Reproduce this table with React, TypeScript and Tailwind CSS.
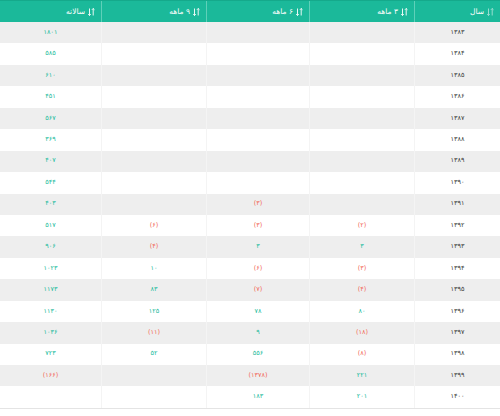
const rows: [string, string, string, string, string][] = [
  ['۱۳۸۳', '', '', '', '۱۸۰۱'],
  ['۱۳۸۴', '', '', '', '۵۸۵'],
  ['۱۳۸۵', '', '', '', '۶۱۰'],
  ['۱۳۸۶', '', '', '', '۴۵۱'],
  ['۱۳۸۷', '', '', '', '۵۶۷'],
  ['۱۳۸۸', '', '', '', '۳۶۹'],
  ['۱۳۸۹', '', '', '', '۴۰۷'],
  ['۱۳۹۰', '', '', '', '۵۴۴'],
  ['۱۳۹۱', '', '(۳)', '', '۴۰۳'],
  ['۱۳۹۲', '(۲)', '(۳)', '(۶)', '۵۱۷'],
  ['۱۳۹۳', '۳', '۳', '(۴)', '۹۰۶'],
  ['۱۳۹۴', '(۳)', '(۶)', '۱۰', '۱۰۲۳'],
  ['۱۳۹۵', '(۴)', '(۷)', '۸۳', '۱۱۷۳'],
  ['۱۳۹۶', '۸۰', '۷۸', '۱۲۵', '۱۱۳۰'],
  ['۱۳۹۷', '(۱۸)', '۹', '(۱۱)', '۱۰۳۶'],
  ['۱۳۹۸', '(۸)', '۵۵۶', '۵۲', '۷۲۳'],
  ['۱۳۹۹', '۲۲۱', '(۱۳۷۸)', '', '(۱۶۶)'],
  ['۱۴۰۰', '۲۰۱', '۱۸۳', '', ''],
];

const headers = ['سال', '۳ ماهه', '۶ ماهه', '۹ ماهه', 'سالانه'];

// little up/down sort arrows
const SortIcon = ({ light }: { light?: boolean }) => (
  <svg width="7" height="8" viewBox="0 0 7 8" className={light ? 'opacity-60' : ''}>
    <path d="M1.5 0.5v7M0.2 6.2l1.3 1.3 1.3-1.3" stroke="white" strokeWidth="0.9" fill="none" />
    <path d="M5.2 7.5v-7M3.9 1.8l1.3-1.3 1.3 1.3" stroke="white" strokeWidth="0.9" fill="none" />
  </svg>
);

const App = () => {
  return (
    <div dir="rtl" className="w-[500px] h-[416px] bg-white" style={{ fontFamily: '"DejaVu Sans", sans-serif' }}>
      <div className="grid grid-cols-[86px_105px_103px_105px_1fr] h-[22px] bg-[#1bb99a] border-t border-[#15a98b] text-white text-[7.5px]">
        {headers.map((h, i) => (
          <div key={h} className={`flex items-center gap-[3px] pr-[6px] ${i < 4 ? 'border-l border-[#5fd0b9]' : ''}`}>
            <SortIcon light={i === 0} />
            <span>{h}</span>
          </div>
        ))}
      </div>
      <div className="border-b border-[#e4e4e4]">
        {rows.map((r, ri) => (
          <div
            key={r[0]}
            className={`grid grid-cols-[86px_105px_103px_105px_1fr] h-[21.45px] text-[6.5px] ${ri % 2 === 0 ? 'bg-[#eeeeee]' : 'bg-white'}`}
          >
            {r.map((v, ci) => (
              <div
                key={ci}
                className={`flex items-center justify-center ${ci < 4 ? 'border-l border-[#f4f4f4]' : ''} ${
                  ci === 0 ? 'text-[#3a3a3a]' : v.startsWith('(') ? 'text-[#f26a5a]' : 'text-[#22bb9c]'
                }`}
              >
                {v}
              </div>
            ))}
          </div>
        ))}
      </div>
    </div>
  );
};

export default App;
